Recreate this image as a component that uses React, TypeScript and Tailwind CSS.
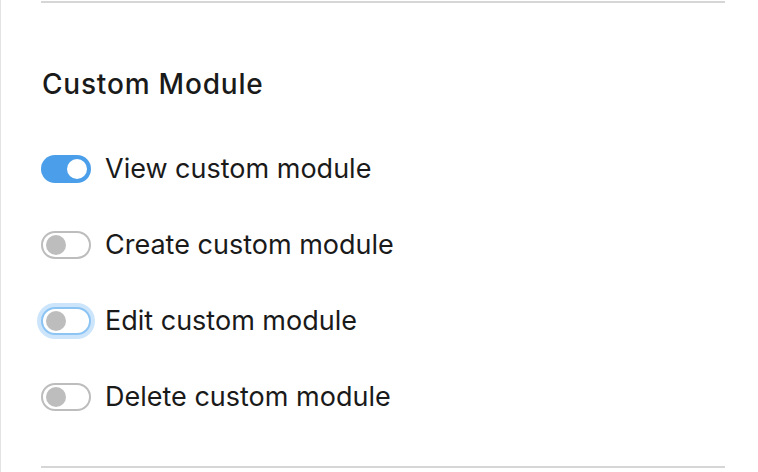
import React from 'react';

type ToggleState = 'on' | 'off' | 'focus';

function Toggle({ state }: { state: ToggleState }) {
  if (state === 'on') {
    return (
      <div className="w-[50px] h-[28px] rounded-full bg-[#4b9fea] flex items-center justify-end pr-[4px] shrink-0">
        <div className="w-[20px] h-[20px] rounded-full bg-white" />
      </div>
    );
  }
  if (state === 'focus') {
    return (
      <div className="w-[50px] h-[28px] rounded-full bg-white border-2 border-[#8cc4f4] ring-4 ring-[#cde5fb] flex items-center pl-[3px] shrink-0">
        <div className="w-[20px] h-[20px] rounded-full bg-[#bdbdbd]" />
      </div>
    );
  }
  return (
    <div className="w-[50px] h-[28px] rounded-full bg-white border-2 border-[#bdbdbd] flex items-center pl-[3px] shrink-0">
      <div className="w-[20px] h-[20px] rounded-full bg-[#bdbdbd]" />
    </div>
  );
}

const permissions: { label: string; state: ToggleState }[] = [
  { label: 'View custom module', state: 'on' },
  { label: 'Create custom module', state: 'off' },
  { label: 'Edit custom module', state: 'focus' },
  { label: 'Delete custom module', state: 'off' },
];

export default function App() {
  return (
    <div
      className="w-[758px] h-[472px] bg-white border-l border-[#e3e3e3] pl-[40px] pr-[33px] pt-px flex flex-col text-[#1a1a1a]"
      style={{ fontFamily: 'Inter, "Noto Sans", sans-serif' }}
    >
      <div className="h-[2px] bg-[#d6d6d6]" />
      <h2 className="mt-[64px] text-[28px] leading-[34px] font-medium tracking-[0.8px] pl-[1px]">Custom Module</h2>
      <div className="mt-[54px] flex flex-col gap-[48px]">
        {permissions.map((p) => (
          <div key={p.label} className="flex items-center gap-[14px] h-[28px]">
            <Toggle state={p.state} />
            <span className="text-[27px] leading-[30px]">{p.label}</span>
          </div>
        ))}
      </div>
      <div className="mt-auto mb-[4px] h-[2px] bg-[#d6d6d6]" />
    </div>
  );
}
